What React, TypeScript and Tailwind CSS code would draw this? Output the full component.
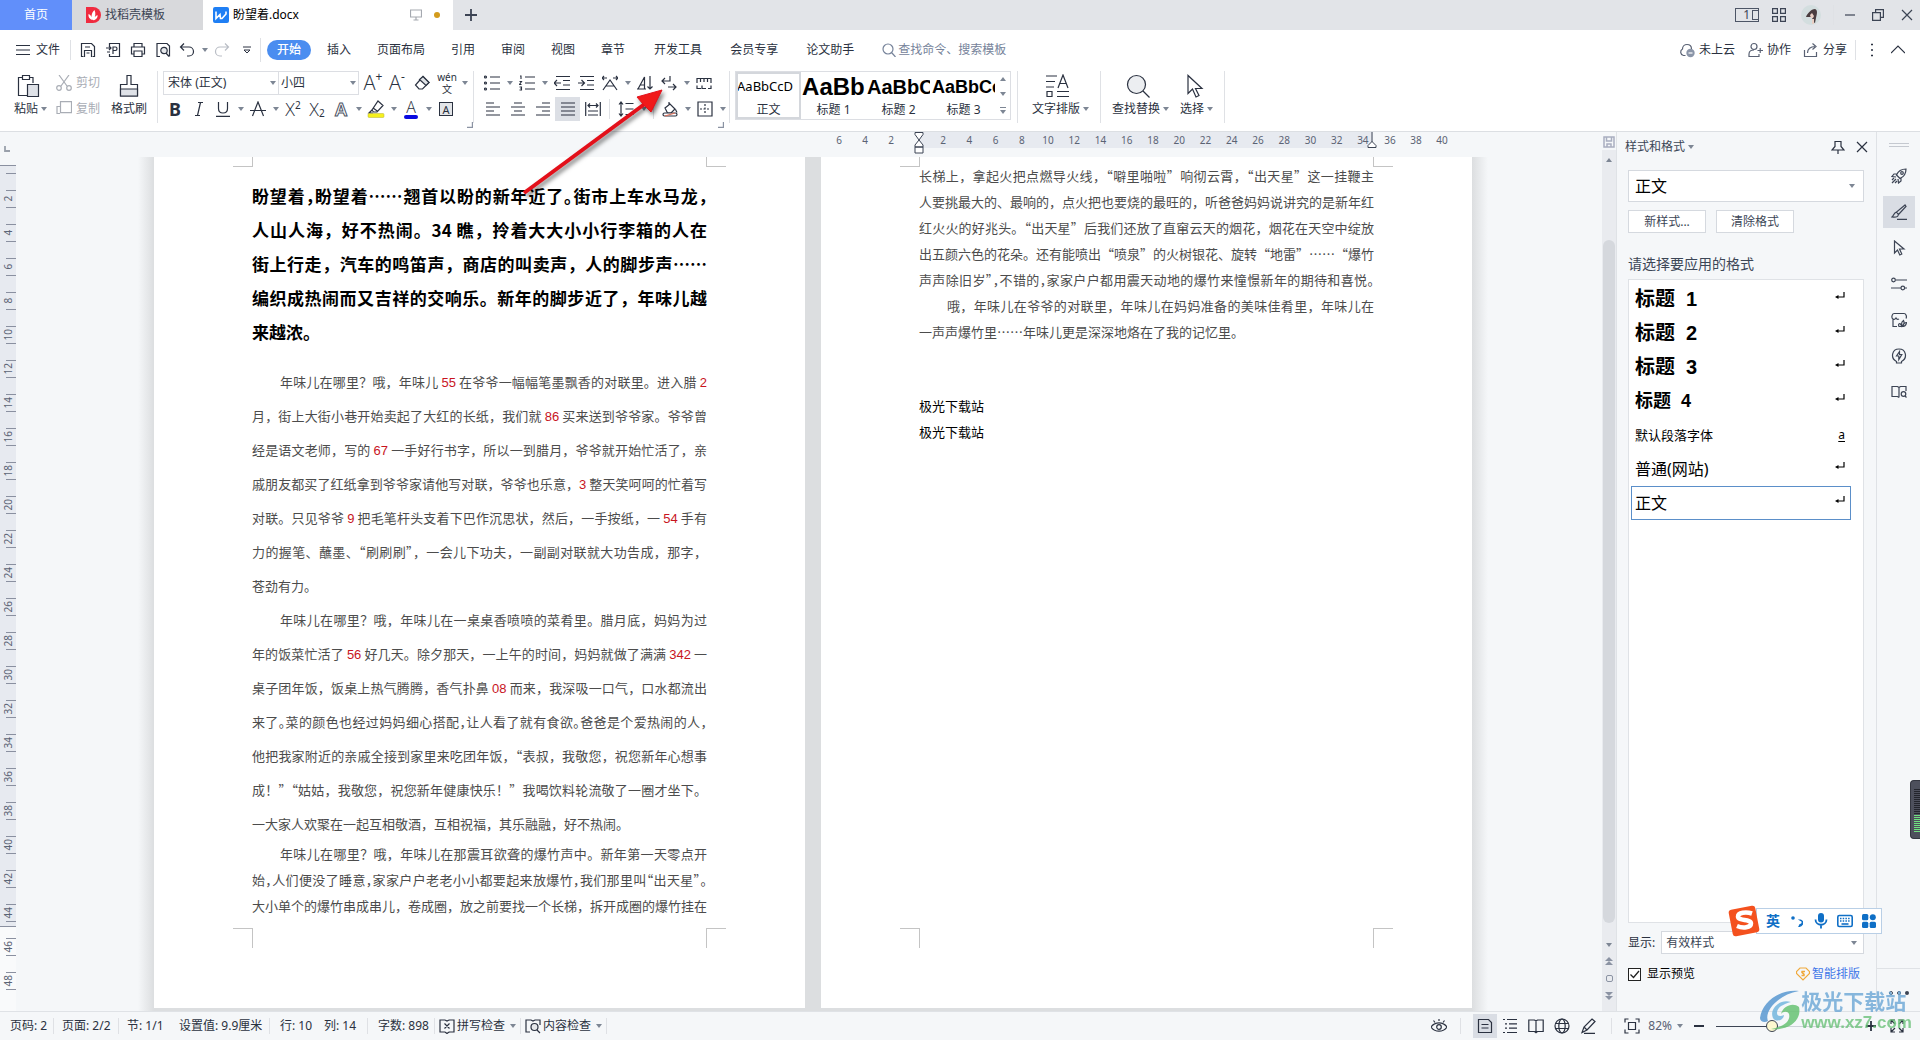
import type { ReactNode } from 'react';
import clsx from 'clsx';

const UI_FONT = "font-['Noto_Sans','Noto_Sans_CJK_SC',sans-serif]";
const DOC_FONT = "font-['Noto_Sans_CJK_SC',sans-serif]";

const menus = ['插入', '页面布局', '引用', '审阅', '视图', '章节'];
const wideMenus = ['开发工具', '会员专享', '论文助手'];

interface LineData {
  text: string;
  indent?: boolean;
  last?: boolean;
  tight?: boolean;
}

const leadLines: LineData[] = [
  { text: '盼望着，盼望着……翘首以盼的新年近了。街市上车水马龙，', tight: true },
  { text: '人山人海，好不热闹。34 瞧，拎着大大小小行李箱的人在' },
  { text: '街上行走，汽车的鸣笛声，商店的叫卖声，人的脚步声……' },
  { text: '编织成热闹而又吉祥的交响乐。新年的脚步近了，年味儿越' },
  { text: '来越浓。', last: true },
];

const bodyLines: LineData[] = [
  { text: '年味儿在哪里？哦，年味儿 55 在爷爷一幅幅笔墨飘香的对联里。进入腊 2', indent: true },
  { text: '月，街上大街小巷开始卖起了大红的长纸，我们就 86 买来送到爷爷家。爷爷曾' },
  { text: '经是语文老师，写的 67 一手好行书字，所以一到腊月，爷爷就开始忙活了，亲' },
  { text: '戚朋友都买了红纸拿到爷爷家请他写对联，爷爷也乐意，3 整天笑呵呵的忙着写' },
  { text: '对联。只见爷爷 9 把毛笔杆头支着下巴作沉思状，然后，一手按纸，一 54 手有' },
  { text: '力的握笔、蘸墨、“刷刷刷”，一会儿下功夫，一副副对联就大功告成，那字，' },
  { text: '苍劲有力。', last: true },
  { text: '年味儿在哪里？哦，年味儿在一桌桌香喷喷的菜肴里。腊月底，妈妈为过', indent: true },
  { text: '年的饭菜忙活了 56 好几天。除夕那天，一上午的时间，妈妈就做了满满 342 一' },
  { text: '桌子团年饭，饭桌上热气腾腾，香气扑鼻 08 而来，我深吸一口气，口水都流出' },
  { text: '来了。菜的颜色也经过妈妈细心搭配，让人看了就有食欲。爸爸是个爱热闹的人，', tight: true },
  { text: '他把我家附近的亲戚全接到家里来吃团年饭，“表叔，我敬您，祝您新年心想事' },
  { text: '成！”“姑姑，我敬您，祝您新年健康快乐！”我喝饮料轮流敬了一圈才坐下。' },
  { text: '一大家人欢聚在一起互相敬酒，互相祝福，其乐融融，好不热闹。', last: true },
];

const closingLines: LineData[] = [
  { text: '年味儿在哪里？哦，年味儿在那震耳欲聋的爆竹声中。新年第一天零点开', indent: true },
  { text: '始，人们便没了睡意，家家户户老老小小都要起来放爆竹，我们那里叫“出天星”。', tight: true },
  { text: '大小单个的爆竹串成串儿，卷成圈，放之前要找一个长梯，拆开成圈的爆竹挂在' },
];

const secondPageLines: LineData[] = [
  { text: '长梯上，拿起火把点燃导火线，“噼里啪啦”响彻云霄，“出天星”这一挂鞭主' },
  { text: '人要挑最大的、最响的，点火把也要烧的最旺的，听爸爸妈妈说讲究的是新年红' },
  { text: '红火火的好兆头。“出天星”后我们还放了直窜云天的烟花，烟花在天空中绽放' },
  { text: '出五颜六色的花朵。还有能喷出“喷泉”的火树银花、旋转“地雷”……“爆竹' },
  { text: '声声除旧岁”，不错的，家家户户都用震天动地的爆竹来憧憬新年的期待和喜悦。', tight: true },
  { text: '哦，年味儿在爷爷的对联里，年味儿在妈妈准备的美味佳肴里，年味儿在', indent: true },
  { text: '一声声爆竹里……年味儿更是深深地烙在了我的记忆里。', last: true },
];

const styleRows = [
  { name: '标题 1', className: "text-xl font-bold font-['Liberation_Sans','Noto_Sans_CJK_SC',sans-serif]" },
  { name: '标题 2', className: "text-xl font-bold font-['Liberation_Sans','Noto_Sans_CJK_SC',sans-serif]" },
  { name: '标题 3', className: "text-xl font-bold font-['Liberation_Sans','Noto_Sans_CJK_SC',sans-serif]" },
  { name: '标题 4', className: "text-lg font-bold font-['Liberation_Sans','Noto_Sans_CJK_SC',sans-serif]" },
  { name: '默认段落字体', className: 'text-[13px]', mark: 'a' },
  { name: '普通(网站)', className: 'text-base' },
  { name: '正文', className: 'text-base', selected: true },
];

const evens = (from: number, to: number) => {
  const out: number[] = [];
  for (let n = from; n <= to; n += 2) out.push(n);
  return out;
};

function Icon({ children, className = 'size-5', box = '0 0 20 20' }: { children: ReactNode; className?: string; box?: string }) {
  return (
    <svg viewBox={box} fill="none" stroke="currentColor" strokeWidth="1.2" className={clsx('shrink-0', className)} aria-hidden="true">
      {children}
    </svg>
  );
}

function Caret({ className = 'w-[11px]' }: { className?: string }) {
  return (
    <span className={clsx('flex shrink-0 justify-center text-[#7d8694]', className)}>
      <svg viewBox="0 0 6 4" className="h-1 w-1.5" fill="currentColor" aria-hidden="true">
        <path d="M0 0h6L3 4z" />
      </svg>
    </span>
  );
}

function Tool({ label, children, caret, className = 'w-6' }: { label: string; children: ReactNode; caret?: boolean; className?: string }) {
  return (
    <button type="button" aria-label={label} className="flex h-6 shrink-0 items-center">
      <span className={clsx('flex h-6 items-center justify-center', className)}>{children}</span>
      {caret && <Caret />}
    </button>
  );
}

function Divider({ className = 'h-5' }: { className?: string }) {
  return <span className={clsx('w-px shrink-0 bg-[#dfe1e5]', className)} />;
}

function TitleBar() {
  return (
    <header className="flex h-[30px] shrink-0 bg-[#e2e4e8] text-[#3c4454]">
      <button type="button" className="w-[72px] bg-[#618ffa] text-white">首页</button>
      <button type="button" className="flex w-[131px] items-center gap-1 bg-[#d8d9dc] pl-[13px]">
        <svg viewBox="0 0 16 16" className="size-4" aria-hidden="true">
          <path d="M1 0h7a8 8 0 0 1 0 16H1z" fill="#f02b3f" />
          <path d="M7.500 13C6 11 6 6 9.500 3c1.500 3 1 7-1 10zM3.500 7c2 .5 3.500 2.500 3.500 6C4.500 12 3 10 3.500 7zM12.500 8c.5 2.500-1 4.500-4 5.500.3-2.500 1.500-4.500 4-5.500z" fill="#fff" />
        </svg>
        找稻壳模板
      </button>
      <div className="flex w-[250px] items-center bg-white pl-2.5 text-black">
        <svg viewBox="0 0 16 16" className="mr-1 size-4" aria-hidden="true">
          <rect width="16" height="16" rx="2" fill="#1f7ff4" />
          <path d="M3 4.500v7l4-4 .5 4H9l4-4.500V4.500" fill="none" stroke="#fff" strokeWidth="1.600" />
        </svg>
        <span className="flex-1">盼望着.docx</span>
        <Icon className="mr-3 size-3 text-[#a5a9b0]" box="0 0 12 12">
          <path d="M.5 1h11v7h-11zM6 8v3M3.500 11h5" />
        </Icon>
        <span className="mr-[13px] size-1.5 rounded-full bg-[#d39b1c]" />
      </div>
      <button type="button" aria-label="新建标签" className="flex w-9 items-center justify-center">
        <Icon className="size-3" box="0 0 12 12"><path d="M6 0v12M0 6h12" strokeWidth="1.800" /></Icon>
      </button>
      <div className="ml-auto flex items-center">
        <button type="button" aria-label="切换窗口" className="flex h-[14px] w-6 items-center justify-end border border-[#4d5566] text-xs leading-3">
          1<span className="ml-0.5 h-[10px] w-1.5 border border-r-0 border-[#4d5566]" />
        </button>
        <button type="button" aria-label="应用" className="ml-3 flex w-4 justify-center">
          <Icon className="size-[14px]" box="0 0 14 14"><path d="M.6.6h4.800v4.800H.6zM8.600.6h4.800v4.800H8.600zM.6 8.600h4.800v4.800H.6zM8.600 8.600h4.800v4.800H8.600z" /></Icon>
        </button>
        <button type="button" aria-label="帐号" className="ml-3.5 mr-3">
          <svg viewBox="0 0 20 20" className="size-5" aria-hidden="true">
            <circle cx="10" cy="10" r="10" fill="#d3dedf" />
            <path d="M5 12c1-3 5-8 9-8 3 1 2 5 1 9l-1 5-2-1-1-5-3 0z" fill="#4a3d3f" />
            <path d="M9 10l2-2 2 3-1 2-2 0zM11 14l2 0 0 5-2 0z" fill="#e9cfc4" />
          </svg>
        </button>
        <Divider className="h-5 bg-[#c9ccd2]" />
        <button type="button" aria-label="最小化" className="ml-1 flex w-6 justify-center">
          <Icon className="size-3" box="0 0 12 12"><path d="M1 6h10" /></Icon>
        </button>
        <button type="button" aria-label="还原" className="flex w-8 justify-center">
          <Icon className="size-3" box="0 0 12 12"><path d="M.6 3.600h7.800v7.800H.6zM3.600 3.600V.6h7.800v7.800h-3" /></Icon>
        </button>
        <button type="button" aria-label="关闭" className="flex w-[26px] justify-center">
          <Icon className="size-3" box="0 0 12 12"><path d="M1 1l10 10M11 1L1 11" /></Icon>
        </button>
      </div>
    </header>
  );
}

function MenuBar() {
  return (
    <nav className="flex h-[38px] shrink-0 items-center pt-0.5 text-[#2a3140]">
      <button type="button" className="ml-4 flex items-center gap-1.5">
        <Icon className="size-3.5" box="0 0 14 14"><path d="M0 2.500h14M0 7h14M0 11.500h14" /></Icon>
        文件
      </button>
      <Divider className="ml-2.5 mr-1 h-5" />
      <Tool label="保存" className="w-[25px]">
        <Icon className="size-4" box="0 0 16 16"><path d="M3.500 14.500h-2v-13h10l3 3v10h-2M4.500 15V8.500h7V15M5 5h5M6.500 11h3" /></Icon>
      </Tool>
      <Tool label="输出为PDF" className="w-[25px]">
        <Icon className="size-4" box="0 0 16 16"><path d="M4.500 4V1.500h10v13h-10V12M1 6h5M4 4l2 2-2 2M8 12V5h2.500c2 0 2 3.500 0 3.500H8M2 10h3" /></Icon>
      </Tool>
      <Tool label="打印" className="w-[25px]">
        <Icon className="size-4" box="0 0 16 16"><path d="M4 5V1.500h8V5M4 12H1.500V5h13v7H12M4 9h8v5.500H4z" /></Icon>
      </Tool>
      <Tool label="打印预览" className="w-[25px]">
        <Icon className="size-4" box="0 0 16 16"><path d="M5 14.500H2v-13h10l2.500 2.500v10.500M11 11l3 3.500" /><circle cx="9" cy="8.500" r="3.200" fill="#e6e8eb" /></Icon>
      </Tool>
      <Tool label="撤销" caret>
        <Icon className="size-4" box="0 0 16 16"><path d="M5 1.500L1.500 5 5 8.500M1.500 5H10a4.500 4.500 0 0 1 0 9H8" /></Icon>
      </Tool>
      <Tool label="恢复">
        <Icon className="size-4 text-[#b9bdc5]" box="0 0 16 16"><path d="M11 1.500L14.500 5 11 8.500M14.500 5H6a4.500 4.500 0 0 0 0 9h2" /></Icon>
      </Tool>
      <Tool label="自定义快速访问工具栏" className="w-[26px]">
        <Icon className="size-2" box="0 0 8 8"><path d="M0 1h8M1 4h6L4 7z" strokeWidth="1" /></Icon>
      </Tool>
      <Divider className="mr-1.5 h-6" />
      <button type="button" className="h-5 w-11 rounded-full bg-[#4a8df0] font-medium text-white">开始</button>
      <div className="ml-4 flex gap-[26px]">
        {menus.map((name) => (
          <button type="button" key={name}>{name}</button>
        ))}
      </div>
      <div className="ml-[29px] flex gap-[28px]">
        {wideMenus.map((name) => (
          <button type="button" key={name}>{name}</button>
        ))}
      </div>
      <label className="ml-7 flex items-center gap-0.5 text-[#76839a]">
        <Icon className="size-3.5" box="0 0 14 14"><circle cx="6" cy="6" r="5" /><path d="M9.500 9.500L13.500 14" /></Icon>
        <input aria-label="查找命令" placeholder="查找命令、搜索模板" className="w-32 outline-none placeholder:text-[#76839a]" />
      </label>
      <div className="ml-auto flex items-center gap-3 pr-3.5">
        <button type="button" className="flex items-center gap-1">
          <Icon className="size-4 text-[#596173]" box="0 0 16 16">
            <path d="M6.500 13.500H4.500A3.500 3.500 0 0 1 3.500 7C3.500 1 12.500 1 12.500 7" />
            <circle cx="11.500" cy="11" r="4.200" fill="#8b95a8" stroke="none" /><path d="M9.500 11h4" stroke="#fff" />
          </Icon>
          未上云
        </button>
        <button type="button" className="flex items-center gap-1">
          <Icon className="size-4 text-[#596173]" box="0 0 16 16"><circle cx="7" cy="4.500" r="3" /><path d="M12 12v2.500H2V12c0-3 3-4 5-4M10.500 8.500H16M13.200 6v5" /></Icon>
          协作
        </button>
        <button type="button" className="flex items-center gap-1">
          <Icon className="size-4 text-[#596173]" box="0 0 16 16"><path d="M1.500 8v6.500h12V10M4.500 11c0-4 3-6.500 7.500-6.500M9.500 1.500l3.500 3-3.500 3" /></Icon>
          分享
        </button>
        <Divider className="-ml-1 h-5" />
        <button type="button" aria-label="更多" className="-ml-0.5 flex w-3 justify-center">
          <Icon className="h-3.5 w-1" box="0 0 4 14"><path d="M1 1.500h2M1 7h2M1 12.500h2" strokeWidth="1.500" /></Icon>
        </button>
        <button type="button" aria-label="收起功能区" className="flex w-4 justify-center">
          <Icon className="size-3.5" box="0 0 14 14"><path d="M0 10l7-7 7 7" /></Icon>
        </button>
      </div>
    </nav>
  );
}

function Launcher() {
  return (
    <button type="button" aria-label="更多设置" className="ml-auto mt-px block">
      <Icon className="size-1.5 text-[#8b93a3]" box="0 0 6 6"><path d="M5.400 0v5.400H0" /></Icon>
    </button>
  );
}

const A_FONT = "font-['Open_Sans',sans-serif] font-light leading-none";

function FontGroup() {
  return (
    <div className="w-[310px]">
      <div className="flex h-6 items-center">
        <div className="flex border border-[#dcdee3]">
          <label className="relative flex h-[22px] w-[115px] items-center border-r border-[#dcdee3]">
            <select aria-label="字体" className="w-full appearance-none pl-1 outline-none"><option>宋体 (正文)</option></select>
            <span className="pointer-events-none absolute right-0"><Caret /></span>
          </label>
          <label className="relative flex h-[22px] w-[79px] items-center">
            <select aria-label="字号" className="w-full appearance-none pl-0.5 outline-none"><option>小四</option></select>
            <span className="pointer-events-none absolute right-0"><Caret /></span>
          </label>
        </div>
        <span className="w-0.5" />
        <Tool label="增大字号"><span className={clsx(A_FONT, 'text-xl')}>A</span><sup className="text-xs leading-none">+</sup></Tool>
        <Tool label="减小字号"><span className={clsx(A_FONT, 'text-xl')}>A</span><sup className="text-xs leading-none">-</sup></Tool>
        <Tool label="清除格式" className="w-[26px]">
          <Icon className="size-4" box="0 0 16 16"><path d="M9 1.500l6 6L8.500 14H5L1.500 10z" /><path d="M9 1.500l6 6-3 3-6.500-6z" fill="#dfe2e6" /></Icon>
        </Tool>
        <Tool label="拼音指南" caret>
          <span className="flex flex-col items-center text-[10px] leading-[11px]"><span>wén</span><span className="leading-3">文</span></span>
        </Tool>
      </div>
      <div className="mt-0.5 flex h-6 items-center">
        <Tool label="加粗"><span className="text-lg font-bold leading-none">B</span></Tool>
        <Tool label="倾斜"><Icon className="size-4" box="0 0 16 16"><path d="M7 1.500h5M4 14.500h5M9.500 1.500l-3 13" /></Icon></Tool>
        <Tool label="下划线" caret><Icon className="size-4" box="0 0 16 16"><path d="M3.500 1v6.500c0 6 9 6 9 0V1M1 15.300h14" /></Icon></Tool>
        <Tool label="删除线" caret><Icon className="size-4" box="0 0 16 16"><path d="M2.500 15L8 1l5.500 14M0 9.500h16" /></Icon></Tool>
        <Tool label="上标"><span className={clsx(A_FONT, 'text-lg')}>X</span><span className="mb-2 text-[10px] leading-none">2</span></Tool>
        <Tool label="下标"><span className={clsx(A_FONT, 'text-lg')}>X</span><span className="mt-2 text-[10px] leading-none">2</span></Tool>
        <Tool label="文字效果" caret>
          <span className="text-lg font-semibold leading-none text-white [-webkit-text-stroke:1px_#4d5566]">A</span>
        </Tool>
        <Tool label="突出显示" caret>
          <Icon className="size-[18px]" box="0 0 18 18"><path d="M11 1l5 4.500-6 6.500H6.500L5 10zM6 8l5 3.500M5 10l-3 3h4" /><rect x="1" y="13.500" width="16" height="4" rx="1" fill="#f6f01c" stroke="#b5b03a" strokeWidth=".5" /></Icon>
        </Tool>
        <Tool label="字体颜色" caret>
          <span className="flex flex-col items-center"><span className={clsx(A_FONT, 'text-base leading-[14px]')}>A</span><span className="h-1 w-3.5 rounded-full bg-[#0a0ae0]" /></span>
        </Tool>
        <Tool label="字符底纹"><span className="flex size-3.5 items-center justify-center border border-[#2a3140] bg-[#e3e5e8] text-[11px] leading-none">A</span></Tool>
      </div>
      <Launcher />
    </div>
  );
}

function ParagraphGroup() {
  return (
    <div className="w-[244px]">
      <div className="flex h-6 items-center">
        <Tool label="项目符号" caret>
          <Icon className="size-4" box="0 0 16 16"><path d="M6 2h10M6 8h10M6 14h10" /><circle cx="1.500" cy="2" r="1" /><circle cx="1.500" cy="8" r="1" /><circle cx="1.500" cy="14" r="1" /></Icon>
        </Tool>
        <Tool label="编号" caret>
          <Icon className="size-4" box="0 0 16 16"><path d="M6 2h10M6 8h10M6 14h10M1 1h1v3M.5 6.500h2l-2 3h2M.5 12h2v1.500h-1 1V15h-2" strokeWidth="1.100" /></Icon>
        </Tool>
        <Tool label="减少缩进"><Icon className="size-4" box="0 0 16 16"><path d="M2 1.500h14M9 5.500h7M9 10h7M2 14.500h14M0 8h7M3 5L0 8l3 3" /></Icon></Tool>
        <Tool label="增加缩进"><Icon className="size-4" box="0 0 16 16"><path d="M2 1.500h14M9 5.500h7M9 10h7M2 14.500h14M0 8h6M3.500 5l3 3-3 3" /></Icon></Tool>
        <Tool label="中文版式" caret><Icon className="size-4" box="0 0 16 16"><path d="M0 3h5M2 1L0 3l2 2M11 3h5M14 1l2 2-2 2M1 15L8 5l7 10M4 11h8" /></Icon></Tool>
        <Tool label="排序"><Icon className="size-4" box="0 0 16 16"><path d="M1 14L7.500 2v12zM3 10h4.500M0 14h9M13 1v13M10.500 11.500L13 14l2.500-2.500" /></Icon></Tool>
        <Tool label="显示/隐藏编辑标记" caret><Icon className="size-4" box="0 0 16 16"><path d="M9 1v5H1M4 3L1 6l3 3M7 12h8M12 9l3 3-3 3" /></Icon></Tool>
        <Tool label="制表位"><Icon className="size-4" box="0 0 16 16"><path d="M1 8V3.500h14V8M4.500 4v3M8 4v3M11.500 4v3M1 10.500v3h4M6 10.500v3h4M15 10.500v3h-3" /></Icon></Tool>
      </div>
      <div className="mt-0.5 flex h-6 items-center">
        <Tool label="左对齐" className="w-[25px]"><Icon className="size-4" box="0 0 16 16"><path d="M1 2h8M1 6h14M1 10h8M1 14h14" /></Icon></Tool>
        <Tool label="居中对齐" className="w-[25px]"><Icon className="size-4" box="0 0 16 16"><path d="M4 2h8M1 6h14M4 10h8M1 14h14" /></Icon></Tool>
        <Tool label="右对齐" className="w-[25px]"><Icon className="size-4" box="0 0 16 16"><path d="M7 2h8M1 6h14M7 10h8M1 14h14" /></Icon></Tool>
        <Tool label="两端对齐" className="w-[25px] bg-[#dcdfe5]"><Icon className="size-4" box="0 0 16 16"><path d="M1 2h14M1 6h14M1 10h14M1 14h14" /></Icon></Tool>
        <Tool label="分散对齐" className="w-[25px]"><Icon className="size-4" box="0 0 16 16"><path d="M.7 1v14M15.300 1v14M3 4.500h10M5 2.500l-2 2 2 2M11 2.500l2 2-2 2M3 10h10M3 14h10" /></Icon></Tool>
        <Divider className="mx-1 h-5" />
        <Tool label="行距" caret><Icon className="size-4" box="0 0 16 16"><path d="M3 1v14M1 3.500L3 1l2 2.500M1 12.500L3 15l2-2.500M7.500 2.500h8M7.500 8h8M7.500 13.500h8" /></Icon></Tool>
        <Divider className="mx-1 h-5" />
        <Tool label="底纹颜色" caret><Icon className="size-4" box="0 0 16 16"><path d="M7 1v4M3 7l5-4 5 5-4 4H5.500zM13.500 8.500l1.500 3" /><rect x="1" y="12" width="14" height="3" rx="1.500" fill="#fff" /><path d="M3 15l10-3" stroke="#e0705a" /></Icon></Tool>
        <Tool label="边框" caret><Icon className="size-4" box="0 0 16 16"><path d="M1 1h14v14H1z" /><path d="M8 3v10M3 8h10" strokeDasharray="2 1.500" /></Icon></Tool>
      </div>
      <Launcher />
    </div>
  );
}

const presets = [
  { name: '正文', sample: 'AaBbCcD', className: 'text-[13px]' },
  { name: '标题 1', sample: 'AaBb', className: "font-['Liberation_Sans'] text-2xl font-bold" },
  { name: '标题 2', sample: 'AaBbC', className: "font-['Liberation_Sans'] text-xl font-bold" },
  { name: '标题 3', sample: 'AaBbCc', className: "font-['Liberation_Sans'] text-lg font-bold" },
];

function BigTool({ label, icon }: { label: string; icon: ReactNode }) {
  return (
    <button type="button" className="flex flex-col items-center">
      <span className="flex h-[30px] items-center justify-center">{icon}</span>
      <span className="flex items-center whitespace-nowrap pl-2">{label}<Caret className="w-3" /></span>
    </button>
  );
}

function Ribbon() {
  return (
    <div className="flex h-16 shrink-0 border-b border-[#dcdfe3] pt-[3px] text-[#2a3140]">
      <div className="flex pl-1.5">
        <BigTool label="粘贴" icon={
          <Icon className="size-6" box="0 0 24 24"><path d="M6 3.500H2.500v18h9M17 9V3.500h-3.500M6.500 1.500h7v4h-7z" /><path d="M11.500 10.500h11v12h-11z" fill="#dfe2e8" /></Icon>
        } />
        <div className="ml-1.5 flex flex-col gap-0.5 text-[#a9adb5]">
          <button type="button" className="flex h-6 items-center gap-1">
            <Icon className="size-4" box="0 0 16 16"><path d="M3 0l8 11M13 0L5 11" /><circle cx="3" cy="13" r="2.300" /><circle cx="13" cy="13" r="2.300" /></Icon>剪切
          </button>
          <button type="button" className="flex h-6 items-center gap-1">
            <Icon className="size-4" box="0 0 16 16"><path d="M4 12.500H1v-7h3M4.500.6h11v11h-11z" /></Icon>复制
          </button>
        </div>
        <button type="button" className="ml-[11px] flex flex-col items-center">
          <span className="flex h-[30px] items-center">
            <Icon className="size-6" box="0 0 24 24"><path d="M10 1.500h4v9h6.500V22h-17V10.500H10z" /><path d="M3.500 15h17v7h-17z" fill="#dfe2e8" /></Icon>
          </span>
          格式刷
        </button>
      </div>
      <Divider className="ml-2.5 mr-[5px] h-[52px]" />
      <FontGroup />
      <Divider className="mr-1.5 h-[52px]" />
      <ParagraphGroup />
      <Divider className="mx-[5px] h-[52px]" />
      <div className="flex h-[49px] border border-[#dcdee3]">
        {presets.map((p, i) => (
          <button
            type="button"
            key={p.name}
            className={clsx('flex w-[65px] flex-col items-center px-px text-black', i === 0 && 'outline-2 -outline-offset-2 outline-[#d4d7dc]')}
          >
            <span className={clsx('flex h-[30px] w-full items-center overflow-hidden', p.className)}>{p.sample}</span>
            <span className="leading-4 text-[#2a3140]">{p.name}</span>
          </button>
        ))}
        <div className="flex w-3.5 flex-col justify-around">
          <button type="button" aria-label="上一行" className="rotate-180"><Caret className="w-full" /></button>
          <button type="button" aria-label="下一行"><Caret className="w-full" /></button>
          <button type="button" aria-label="更多样式"><span className="mx-auto mb-0.5 block h-px w-1.5 bg-[#7d8694]" /><Caret className="w-full" /></button>
        </div>
      </div>
      <Divider className="mx-1.5 h-[52px]" />
      <BigTool label="文字排版" icon={
        <Icon className="size-6" box="0 0 24 24"><path d="M0 2h11M0 7.500h9M0 13h8M1 17.500h5v5H1zM11 17.500h12M11 22.500h12M12 14l5-13 5 13M13.500 9.500h7" /></Icon>
      } />
      <Divider className="ml-2 mr-[3px] h-[52px]" />
      <BigTool label="查找替换" icon={
        <Icon className="size-6" box="0 0 24 24"><circle cx="10.500" cy="10.500" r="9" fill="#eceef1" /><path d="M17 17l6.500 6.500" /></Icon>
      } />
      <BigTool label="选择" icon={
        <Icon className="size-6" box="0 0 24 24"><path d="M6 1.500v18l4.500-4.500 3.500 8 3-1.500-3.500-7H20z" /></Icon>
      } />
      <Divider className="ml-2 h-[52px]" />
    </div>
  );
}

function Line({ data, className }: { data: LineData; className: string }) {
  return (
    <span
      className={clsx(
        'block whitespace-nowrap',
        className,
        data.indent && 'pl-7',
        !data.last && '[text-align-last:justify]',
        data.tight && "[font-feature-settings:'halt']",
      )}
    >
      {/* numbers are printed in red */}
      {data.text.split(/(\d+)/).map((part, i) => (i % 2 ? <span key={i} className="font-['Liberation_Sans'] leading-none text-[#c8141e]">{part}</span> : part))}
    </span>
  );
}

function Paper({ children }: { children: ReactNode }) {
  return (
    <article className="flex w-[651px] shrink-0 flex-col bg-white">
      <div className="flex justify-between px-[79px]">
        <span className="h-2.5 w-5 border-b border-r border-[#c4c4c4]" />
        <span className="h-2.5 w-5 border-b border-l border-[#c4c4c4]" />
      </div>
      <div className="h-[761px] px-[98px]">{children}</div>
      <div className="flex justify-between px-[79px]">
        <span className="h-5 w-5 border-r border-t border-[#c4c4c4]" />
        <span className="h-5 w-5 border-l border-t border-[#c4c4c4]" />
      </div>
    </article>
  );
}

function HorizontalRuler() {
  return (
    <div className="flex h-[25px] shrink-0 justify-center pl-2 text-[10px] leading-4 text-[#5b6374]">
      <span className="w-[667px] shrink-0" />
      <div className="flex h-4 w-[651px] shrink-0">
        <div className="flex w-[97px] pl-[5px]">
          {[6, 4, 2].map((n) => <span key={n} className="w-[26px] text-center">{n}</span>)}
        </div>
        <div className="relative w-[455px] bg-[#e7eaf0] pl-3">
          <div className="flex w-[446px]">
            {evens(2, 34).map((n) => <span key={n} className="flex-1 text-center">{n}</span>)}
          </div>
          <svg viewBox="0 0 10 22" className="absolute -left-1 top-0 h-[22px] w-2.5 text-[#3c4454]" fill="#fff" stroke="currentColor" aria-hidden="true">
            <path d="M1 .5h8v2L5 8 1 2.500zM5 8l4 5v2H1v-2zM1 15h8v6H1z" />
          </svg>
          <svg viewBox="0 0 10 16" className="absolute -right-1 top-0 h-4 w-2.5 text-[#3c4454]" fill="#fff" stroke="currentColor" aria-hidden="true">
            <path d="M5 0v10M5 9.500l4 4v2H1v-2z" />
          </svg>
        </div>
        <div className="flex pl-1">
          {[36, 38, 40].map((n) => <span key={n} className="w-[26px] text-center">{n}</span>)}
        </div>
      </div>
    </div>
  );
}

function RulerMark({ n }: { n: number }) {
  return (
    <div className="h-[34px]">
      <div className="ml-1.5 h-[17px] border-b border-[#8a90a0]" />
      <div className="ml-1.5 flex h-[17px] items-center justify-center border-b border-[#8a90a0]">
        <span className="mr-1 -rotate-90">{n}</span>
      </div>
    </div>
  );
}

function VerticalRuler() {
  return (
    <div className="w-4 shrink-0 overflow-hidden bg-[#f9fafb] text-[10px] text-[#5b6374]">
      <div className="flex h-[33px] items-center bg-[#f5f7f9] pl-1">
        <Icon className="size-1.5 text-[#9aa0ab]" box="0 0 6 6"><path d="M1 0v5h5" strokeWidth="1.800" /></Icon>
      </div>
      <div className="border-t border-[#8a90a0] bg-[#e7eaf0]">
        <div className="ml-1.5 h-2 border-b border-[#8a90a0]" />
        {evens(2, 44).map((n) => <RulerMark key={n} n={n} />)}
        <div className="h-[5px] border-b border-[#8a90a0]" />
      </div>
      <div className="-mt-[5px]">
        {[46, 48].map((n) => <RulerMark key={n} n={n} />)}
      </div>
    </div>
  );
}

function DocumentArea() {
  return (
    <main className="flex min-w-0 flex-1 flex-col overflow-hidden">
      <HorizontalRuler />
      <div className={clsx('flex min-h-0 flex-1 justify-center pl-2', DOC_FONT)}>
        <span className="-ml-4 w-4 shrink-0 bg-linear-to-r from-[#f5f7f9] to-[#dcdee0]" />
        <div className="flex shrink-0 gap-4 overflow-hidden border-b-[3px] border-[#dcdee0] bg-[#dcdee0]">
          <Paper>
            <p className="pt-3 text-[17px] font-bold leading-[34px] text-black">
              {leadLines.map((line) => (
                <span
                  key={line.text}
                  className={clsx('block whitespace-nowrap', !line.last && '[text-align-last:justify]', line.tight && "[font-feature-settings:'halt']")}
                >
                  {line.text}
                </span>
              ))}
            </p>
            <p className="pt-4 text-[13px] text-[#4c4c4c]">
              {bodyLines.map((line) => <Line key={line.text} data={line} className="leading-[34px]" />)}
            </p>
            <p className="text-[13px] text-[#4c4c4c]">
              {closingLines.map((line) => <Line key={line.text} data={line} className="leading-[26px]" />)}
            </p>
          </Paper>
          <Paper>
            <p className="-mt-1 text-[13px] text-[#4c4c4c]">
              {secondPageLines.map((line) => <Line key={line.text} data={line} className="leading-[26px]" />)}
            </p>
            <p className="mt-12 text-[13px] leading-[26px] text-black">极光下载站</p>
            <p className="text-[13px] leading-[26px] text-black">极光下载站</p>
          </Paper>
        </div>
        <span className="-mr-4 w-4 shrink-0 bg-linear-to-l from-[#f5f7f9] to-[#dcdee0]" />
      </div>
    </main>
  );
}

function ScrollBar() {
  return (
    <div className="flex w-3.5 shrink-0 flex-col items-center bg-[#e9ebef] text-[#8b93a3]">
      <div className="flex h-[18px] w-full items-end justify-center bg-[#f5f7f9] pb-0.5">
        <Icon className="size-3 text-[#a9aec0]" box="0 0 12 12"><path d="M1 1h10v10H1zM3.500 1v4h5V1M4 11V8h4v3" strokeWidth="1.500" /></Icon>
      </div>
      <button type="button" aria-label="向上滚动" className="flex h-5 rotate-180 items-center"><Caret /></button>
      <div className="mt-[70px] w-3 flex-1 rounded-full bg-[#d5d8dd]" />
      <div className="mt-3.5 flex h-[74px] flex-col items-center gap-2.5 pt-1.5">
        <Caret />
        <Icon className="size-2" box="0 0 8 8"><path d="M4 0L0 4h8zM4 4L0 8h8z" fill="currentColor" stroke="none" /></Icon>
        <span className="size-[7px] rounded-xs border border-[#8b93a3]" />
        <Icon className="size-2" box="0 0 8 8"><path d="M4 4L0 0h8zM4 8L0 4h8z" fill="currentColor" stroke="none" /></Icon>
      </div>
    </div>
  );
}

function StylePanel() {
  return (
    <aside className="flex w-[261px] shrink-0 flex-col border-x border-[#dfe2e6] text-[#3c4656]">
      <div className="flex h-[30px] items-center pl-2 pr-[7px]">
        <button type="button" className="flex items-center">样式和格式<Caret /></button>
        <button type="button" aria-label="固定" className="ml-auto mr-2.5">
          <Icon className="size-3.5 text-[#2a3140]" box="0 0 14 14"><path d="M4 1.500h6v5l3 3.500H1l3-3.500zM7 10v4" /></Icon>
        </button>
        <button type="button" aria-label="关闭面板">
          <Icon className="size-3.5 text-[#2a3140]" box="0 0 14 14"><path d="M2 2l10 10M12 2L2 12" /></Icon>
        </button>
      </div>
      <div className="flex min-h-0 flex-1 flex-col pl-[11px] pr-3">
        <label className="relative mt-2 flex h-8 items-center border border-[#d5d9df] bg-white">
          <select aria-label="当前样式" className="w-full appearance-none pl-1.5 text-base text-black outline-none"><option>正文</option></select>
          <span className="pointer-events-none absolute right-1.5"><Caret /></span>
        </label>
        <div className="mt-2 flex gap-2.5">
          <button type="button" className="h-[23px] w-[78px] border border-[#d5d9df] bg-white">新样式...</button>
          <button type="button" className="h-[23px] w-[78px] border border-[#d5d9df] bg-white">清除格式</button>
        </div>
        <h2 className="mb-1 mt-5 text-sm leading-[22px]">请选择要应用的格式</h2>
        <ul className="min-h-0 flex-1 border border-[#dfe2e6] bg-white py-0.5 pl-0.5 pr-3 text-black">
          {styleRows.map((row) => (
            <li key={row.name}>
              <button
                type="button"
                className={clsx(
                  'flex h-[34px] w-full items-center justify-between border pl-[3px] pr-[5px]',
                  row.selected ? 'border-[#5b8fc9]' : 'border-transparent',
                )}
              >
                <span className={clsx('whitespace-pre leading-none', row.className)}>{row.name.replace(' ', '  ')}</span>
                {row.mark ? (
                  <span className="text-xs leading-none underline underline-offset-2">{row.mark}</span>
                ) : (
                  <Icon className="mb-1.5 size-2.5" box="0 0 10 10"><path d="M9 1v5H2" /><path d="M3.500 4v4L0 6z" fill="currentColor" stroke="none" /></Icon>
                )}
              </button>
            </li>
          ))}
        </ul>
        <div className="mt-2 flex items-center gap-1.5">
          <label htmlFor="style-filter" className="text-[#2a3140]">显示:</label>
          <span className="relative flex h-[23px] flex-1 items-center border border-[#d5d9df] bg-white">
            <select id="style-filter" className="w-full appearance-none pl-1 outline-none"><option>有效样式</option></select>
            <span className="pointer-events-none absolute right-1"><Caret /></span>
          </span>
        </div>
        <div className="mb-[27px] mt-2.5 flex h-5 items-center justify-between">
          <label className="flex items-center gap-1.5 text-black">
            <input
              type="checkbox"
              defaultChecked
              className="size-[13px] appearance-none border border-[#222] bg-white"
            />
            <svg viewBox="0 0 13 13" className="pointer-events-none -ml-[19px] size-[13px]" fill="none" stroke="#222" strokeWidth="1.300" aria-hidden="true"><path d="M2.500 6.500l3 3 5.500-6.500" /></svg>
            显示预览
          </label>
          <button type="button" className="mr-1 flex items-center gap-0.5 text-[#3f76e8]">
            <Icon className="size-3.5 text-[#f0a93c]" box="0 0 14 14"><path d="M4 1h6l3.500 3.500v2L7 13 .5 6.500v-2z" /><path d="M9 4.500H6C5 6.500 9 6 8 8.500H5.500" strokeWidth="1.600" /></Icon>
            智能排版
          </button>
        </div>
      </div>
    </aside>
  );
}

function SideRail() {
  return (
    <aside className="flex w-[43px] shrink-0 flex-col items-center text-[#3c4454]">
      <span className="mt-[11px] h-1 w-5 border-y border-[#c5c9d0]" />
      <button type="button" aria-label="快速工具" className="mt-[11px] flex h-9 w-8 items-center justify-center">
        <Icon className="size-4" box="0 0 16 16"><path d="M15 1c-5 0-8 2.500-9.500 6L9 10.500c3.500-1.500 6-4.500 6-9.500zM6 6H3L1 8.500l4 .5M10 10v3L7.500 15 7 11M1 12l2-2M1 15l4-4M4 15l2-2" /><circle cx="11" cy="5" r="1.300" /></Icon>
      </button>
      <button type="button" aria-label="样式" className="my-0.5 flex size-8 items-center justify-center bg-[#d9dde4]">
        <Icon className="size-4" box="0 0 16 16"><path d="M14 1L5.500 8l2 2.500L15 2.500zM5.500 8C2.500 9 3 11.500 1 13c3 .5 6 0 6.500-2.500M6 15.300h10" /></Icon>
      </button>
      <button type="button" aria-label="选择" className="flex h-9 w-8 items-center justify-center">
        <Icon className="size-4" box="0 0 16 16"><path d="M3.500 1v12l3-3 2.300 5 2-1-2.300-5H13z" /></Icon>
      </button>
      <button type="button" aria-label="属性" className="flex h-9 w-8 items-center justify-center">
        <Icon className="size-4" box="0 0 16 16"><circle cx="2.500" cy="4" r="1.800" /><path d="M4.500 4H16M0 12h10M13.500 12H16" /><circle cx="11.800" cy="12" r="1.800" /></Icon>
      </button>
      <button type="button" aria-label="稻壳资源" className="flex h-9 w-8 items-center justify-center">
        <Icon className="size-4" box="0 0 16 16"><path d="M2 7v7.500h4M2 7C0 6 1 1.500 3 1.500h10c2 0 3 3 2 5M2 7c2 1 3-1 3-1s1 2 3 1M8 14.500c-1-2 0-3 1-3l2 3zM11 14.500c-1-3 0-5 1.500-6 1 2 1 4-1.500 6zM11 14.500c1.500 0 4 0 4.500-4-2 0-3.500 2-4.500 4z" /></Icon>
      </button>
      <button type="button" aria-label="智能助手" className="flex h-9 w-8 items-center justify-center">
        <Icon className="size-4" box="0 0 16 16"><path d="M5.500 13.500C-1 10 1 1 8 1s9 9 2.500 12.500V15h-5zM8.500 3.500L5.500 8h2.300v3.500l3-5H8.500z" /></Icon>
      </button>
      <button type="button" aria-label="文档导读" className="flex h-9 w-8 items-center justify-center">
        <Icon className="size-4" box="0 0 16 16"><path d="M8 13.500l-1.500-1H1v-10h5.500L8 3.500l1.500-1H15V7M8 3.500v10M14 12l1.500 1.500" /><circle cx="12.500" cy="10" r="2.300" /></Icon>
      </button>
      <span className="mt-auto h-px w-full bg-[#dfe2e6]" />
      <button type="button" aria-label="更多面板" className="mb-4 mt-[22px] flex gap-1">
        <span className="size-1 rounded-full border border-[#3c4454]" />
        <span className="size-1 rounded-full border border-[#3c4454]" />
        <span className="size-1 rounded-full bg-[#3c4454]" />
      </button>
    </aside>
  );
}

function StatusBar() {
  return (
    <footer className="flex h-[29px] shrink-0 items-center whitespace-nowrap border-t border-[#dfe2e6] text-[#2a3140]">
      <span className="w-[53px] pl-2.5">页码: 2</span>
      <Divider className="h-4" />
      <span className="w-[64px] pl-2">页面: 2/2</span>
      <Divider className="h-4" />
      <span className="w-[52px] pl-2">节: 1/1</span>
      <span className="w-[98px] pl-2">设置值: 9.9厘米</span>
      <Divider className="h-4" />
      <span className="w-11 pl-2.5">行: 10</span>
      <span className="w-[53px] pl-2.5">列: 14</span>
      <Divider className="h-4" />
      <span className="w-[66px] pl-2.5">字数: 898</span>
      <Divider className="h-4" />
      <button type="button" className="flex w-[85px] items-center gap-0.5 pl-1">
        <Icon className="size-4" box="0 0 16 16"><path d="M6 14H1V2h5M10 2h5v12h-5M6 14l2 1.500 2-1.500M6 2l2 1 2-1M5.500 5.500l5 5M10.500 5.500l-5 5" /></Icon>拼写检查<Caret className="w-3" />
      </button>
      <Divider className="h-4" />
      <button type="button" className="flex w-[85px] items-center gap-0.5 pl-1">
        <Icon className="size-4" box="0 0 16 16"><path d="M5 14H1V2h5l2 1 2-1h5v5M12 12l3 3" /><circle cx="9.500" cy="9" r="3.500" fill="#e6e8eb" /></Icon>内容检查<Caret className="w-3" />
      </button>
      <Divider className="h-4" />

      <div className="ml-auto flex items-center pr-[15px]">
        <Tool label="护眼模式" className="w-[26px]"><Icon className="size-4" box="0 0 16 16"><path d="M0 9c4-5.500 12-5.500 16 0-4 5.500-12 5.500-16 0zM8 1v2M2.500 2.500L4 4.500M13.500 2.500L12 4.500" /><circle cx="8" cy="9" r="2.300" /></Icon></Tool>
        <Divider className="ml-2 mr-3 h-4" />
        <Tool label="页面视图" className="w-6 bg-[#d9dde4]"><Icon className="size-4" box="0 0 16 16"><path d="M1.500 1.500h10l3 3v10h-13zM4.500 6.500h7M4.500 10h7" /></Icon></Tool>
        <Tool label="大纲" className="w-[26px]"><Icon className="size-4" box="0 0 16 16"><path d="M1 1.500h2M5 1.500h10M3 5.800h2M7 5.800h8M3 10.200h2M7 10.200h8M1 14.500h2M5 14.500h10" /></Icon></Tool>
        <Tool label="阅读版式" className="w-[26px]"><Icon className="size-4" box="0 0 16 16"><path d="M.8 2h5.700L8 3l1.500-1h5.700v11.500H9.500l-1.500 1.300-1.500-1.300H.8zM8 3v11" /></Icon></Tool>
        <Tool label="Web版式" className="w-[26px]"><Icon className="size-4" box="0 0 16 16"><circle cx="8" cy="8" r="7" /><ellipse cx="8" cy="8" rx="3.200" ry="7" /><path d="M1.500 5.500h13M1.500 10.500h13" /></Icon></Tool>
        <Tool label="写作模式" className="w-[26px]"><Icon className="size-4" box="0 0 16 16"><path d="M12 1l3 2.500L7 12l-5 2.500L4 9zM4 9l3 3M4 15.300h11" /></Icon></Tool>
        <Divider className="ml-2.5 mr-3 h-4" />
        <Tool label="最佳缩放" className="w-4"><Icon className="size-4" box="0 0 16 16"><path d="M1 4.500V1h3.500M11.500 1H15v3.500M15 11.500V15h-3.500M4.500 15H1v-3.500M4.500 4.500h7v7h-7z" /></Icon></Tool>
        <button type="button" className="ml-2 flex items-center text-[#596173]">82%<Caret className="w-4" /></button>
        <Tool label="缩小" className="w-[22px]"><Icon className="size-2.5" box="0 0 10 10"><path d="M0 5h10" strokeWidth="2" /></Icon></Tool>
        <input
          type="range"
          aria-label="显示比例"
          min={0}
          max={100}
          defaultValue={37}
          className="ml-1.5 h-3 w-[147px] appearance-none bg-[linear-gradient(to_right,#3c4454_38%,#cdd1d8_38%)] bg-[length:100%_1px] bg-center bg-no-repeat [&::-webkit-slider-thumb]:size-3 [&::-webkit-slider-thumb]:appearance-none [&::-webkit-slider-thumb]:rounded-full [&::-webkit-slider-thumb]:border [&::-webkit-slider-thumb]:border-[#3c4454] [&::-webkit-slider-thumb]:bg-[#fdf8cf]"
        />
        <Tool label="放大" className="w-4"><Icon className="size-2.5" box="0 0 10 10"><path d="M0 5h10M5 0v10" strokeWidth="1.800" /></Icon></Tool>
        <Tool label="全屏显示" className="ml-2.5 w-4"><Icon className="size-3.5" box="0 0 14 14"><path d="M1 5V1h4M9 1h4v4M13 9v4H9M5 13H1V9M1 1l4 4M13 1L9 5M13 13L9 9M1 13l4-4" /></Icon></Tool>
      </div>
    </footer>
  );
}

function InputMethodBar() {
  return (
    <div className="absolute bottom-[103px] right-[38px] flex items-center text-[#0f6fc6]">
      <svg viewBox="0 0 32 32" className="z-10 -mr-1 size-8" aria-hidden="true">
        <rect x="2.500" y="2.500" width="27" height="27" rx="3" fill="#f4511e" transform="rotate(-11 16 16)" />
        <path d="M24 8.500c-6-2-14-1-14 3 0 5 13 2 13 7 0 4-8 5-14 2.500" fill="none" stroke="#fff" strokeWidth="4.500" />
      </svg>
      <div className="flex h-[26px] items-center border border-[#b9cfe6] bg-white pl-1 *:flex *:w-6 *:justify-center">
        <button type="button" className="text-sm font-bold">英</button>
        <button type="button" aria-label="中英文标点"><Icon className="size-3" box="0 0 12 12"><circle cx="2" cy="3" r="1.800" fill="currentColor" stroke="none" /><path d="M9 5a2 2 0 1 1 0 4.500l-1 2C11 11 12 9 11.500 6.500z" fill="currentColor" /></Icon></button>
        <button type="button" aria-label="语音"><Icon className="size-4" box="0 0 16 16"><rect x="5" y="0" width="6" height="9.500" rx="3" fill="currentColor" stroke="none" /><path d="M2.500 6.500c0 7 11 7 11 0M8 12v3.500" strokeWidth="1.800" /></Icon></button>
        <button type="button" aria-label="软键盘"><Icon className="size-4" box="0 0 16 16"><rect x=".8" y="2.500" width="14.400" height="11" rx="1.500" strokeWidth="1.600" /><path d="M3 5.500h10M3 8h10" strokeDasharray="1.500 1.200" strokeWidth="1.600" /><path d="M4.500 11h7" strokeWidth="1.600" /></Icon></button>
        <button type="button" aria-label="工具箱"><Icon className="size-3.5" box="0 0 14 14"><g fill="currentColor" stroke="none"><rect width="6.300" height="6.300" rx="1.500" /><circle cx="10.800" cy="3.200" r="3" /><rect y="7.700" width="6.300" height="6.300" rx="1.500" /><rect x="7.700" y="7.700" width="6.300" height="6.300" rx="1.500" /></g></Icon></button>
      </div>
    </div>
  );
}

function SiteMark() {
  return (
    <div className="pointer-events-none absolute bottom-2 right-2 flex items-center opacity-80">
      <svg viewBox="0 0 42 40" className="h-10 w-[42px]" aria-hidden="true">
        <path d="M40 1C20-1 3 12 1 28c0 4 5 5 8 3-4-9 9-26 31-30z" fill="#4f93cf" />
        <path d="M32 12C20 8 10 20 14 28c3 5 11 2 11-3-4 2-7 1-7-2 0-6 7-9 14-11z" fill="#6cb3dd" />
        <path d="M40 17c3 13-10 24-28 22 12-2 20-8 18-15-1-3-6-3-8 0 2-8 12-12 18-7z" fill="#5fbf6b" />
      </svg>
      <div className="flex flex-col">
        <span className="text-[21px] font-bold leading-[26px] text-[#6ba7d6]">极光下载站</span>
        <span className="font-['Liberation_Sans'] text-[17px] font-bold leading-[18px] text-[#6cc27a]">www.xz7.com</span>
      </div>
    </div>
  );
}

export default function App() {
  return (
    <div lang="zh-CN" className={clsx('relative flex h-screen flex-col overflow-hidden bg-white text-xs', UI_FONT)}>
      <TitleBar />
      <MenuBar />
      <Ribbon />
      <div className="flex min-h-0 flex-1 bg-[#f5f7f9]">
        <VerticalRuler />
        <DocumentArea />
        <ScrollBar />
        <StylePanel />
        <SideRail />
      </div>
      <div className="shrink-0 bg-[#f5f7f9]">
        <StatusBar />
      </div>

      {/* Arrow pointing at the paragraph mark tool */}
      <svg viewBox="0 0 150 115" className="pointer-events-none absolute left-[518px] top-[85px] h-[115px] w-[150px] drop-shadow-[2px_3px_2px_rgba(0,0,0,0.5)]" aria-hidden="true">
        <path d="M6 108L128 18" stroke="#e3101a" strokeWidth="4" />
        <path d="M144 5l-25 7 6 7 8 8z" fill="#f01a1a" stroke="#e3101a" />
      </svg>

      {/* Volume meter docked to the screen edge */}
      <div className="absolute bottom-[201px] right-0 flex h-[59px] w-2.5 flex-col items-end gap-px overflow-hidden rounded-l-sm border border-r-0 border-[#33363f] bg-[#4d505c] py-2">
        {Array.from({ length: 22 }, (_, i) => (
          <span key={i} className={clsx('h-px w-1.5 shrink-0', i < 13 ? 'bg-[#23252c]' : 'bg-[#6fe07f]')} />
        ))}
      </div>

      <InputMethodBar />
      <SiteMark />
    </div>
  );
}
